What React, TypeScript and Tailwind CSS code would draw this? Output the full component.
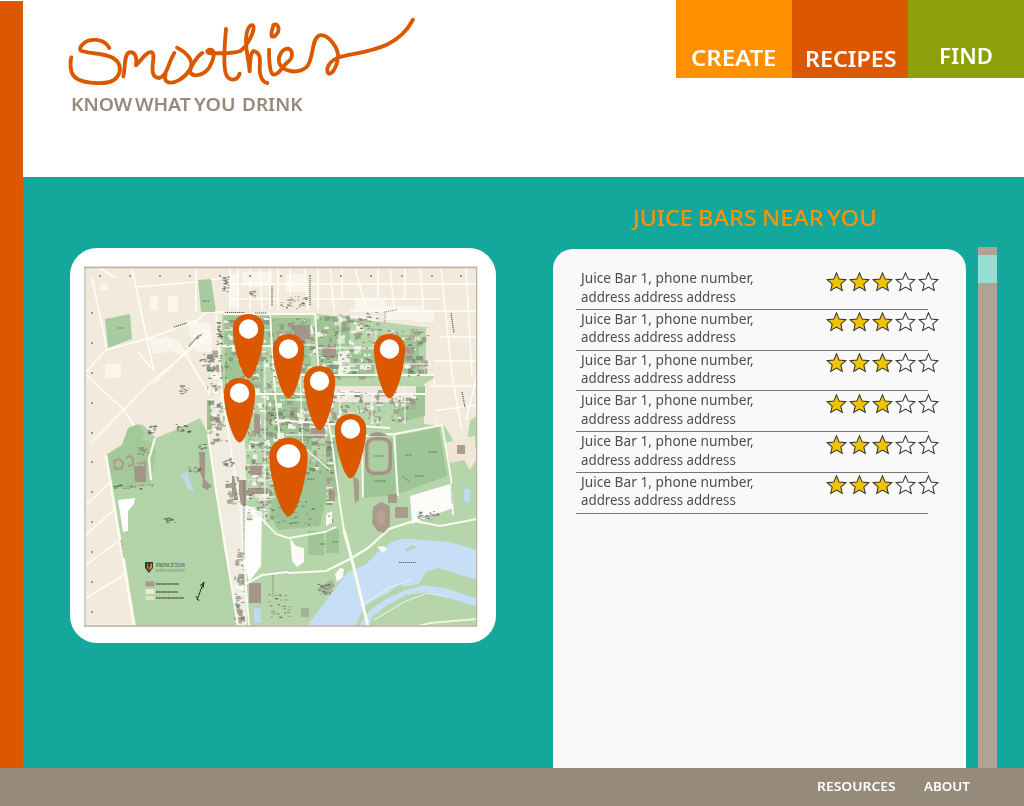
import { useLayoutEffect, useRef, useState } from "react";

type FitProps = { width: number; className?: string; children: string };

/** Text on one line, stretched or condensed to a given width. */
function Fit({ width, className = "", children }: FitProps) {
  const ref = useRef<HTMLSpanElement>(null);
  const [scale, setScale] = useState(1);
  useLayoutEffect(() => {
    if (ref.current) setScale(width / ref.current.offsetWidth);
  }, [width]);
  return (
    <span className={`block whitespace-nowrap ${className}`} style={{ width }}>
      <span ref={ref} className="inline-block origin-left" style={{ transform: `scaleX(${scale})` }}>
        {children}
      </span>
    </span>
  );
}

function Logo() {
  return (
    <svg
      viewBox="0 0 1080 250"
      className="block h-[83.33px] w-[360px]"
      fill="none"
      stroke="#db5800"
      strokeWidth="11.5"
      strokeLinecap="round"
      strokeLinejoin="round"
      role="img"
      aria-label="Smoothies"
    >
      <path d="M148 114C132 84 88 84 70 101C60 109 57 120 65 123C92 132 132 128 159 144C182 157 184 180 174 197C158 223 120 221 92 218C58 214 41 205 35 187C31 173 30 158 34 142" />
      <path d="M190 199C196 174 192 131 208 127C225 124 232 142 228 166C244 152 260 121 276 127C291 136 259 202 297 204C320 202 324 160 343 129" />
      <path d="M351 113C383 130 406 155 388 181C371 207 343 221 326 217C313 213 314 202 317 194" />
      <path d="M427 129C413 137 387 176 391 188C402 204 435 194 449 170C460 151 466 126 457 121C447 116 434 124 448 130C480 128 510 134 541 123C561 111 590 54 578 46C567 41 558 67 558 88C557 128 566 143 569 184C570 153 571 127 581 123C613 130 593 174 601 194C605 211 612 218 622 219" />
      <path d="M498 57C494 110 488 153 497 189C504 214 531 216 539 191" />
      <path d="M627 119C627 144 628 177 636 191C650 204 668 169 682 157C700 145 700 122 686 116C667 115 654 137 657 155C663 185 710 194 739 172C763 149 752 85 779 76C804 71 838 115 834 145C830 173 816 193 806 191C795 180 807 150 840 141C925 121 1014 117 1059 29" />
      <path d="M635 79C631 65 638 62 640 45C651 38 659 52 654 66C648 77 641 82 635 79Z" />
    </svg>
  );
}

function rng(seed: number) {
  let s = seed;
  return () => {
    s = (s * 16807) % 2147483647;
    return s / 2147483647;
  };
}

type Area = { x: number; y: number; w: number; h: number; n: number };
type Block = { x: number; y: number; w: number; h: number; c: string };

const tones = ["#8f9a7f", "#a89d90", "#76856f", "#b5a795", "#84957a", "#fbfcf7", "#fbfcf7", "#e9ecdf", "#a3958a"];

const campus: Area[] = [
  { x: 224, y: 316, w: 48, h: 78, n: 95 },
  { x: 270, y: 318, w: 47, h: 108, n: 120 },
  { x: 315, y: 314, w: 60, h: 66, n: 100 },
  { x: 374, y: 328, w: 56, h: 50, n: 75 },
  { x: 245, y: 394, w: 30, h: 128, n: 120 },
  { x: 208, y: 396, w: 20, h: 50, n: 34 },
  { x: 270, y: 416, w: 58, h: 60, n: 90 },
  { x: 318, y: 390, w: 100, h: 38, n: 85 },
  { x: 206, y: 350, w: 17, h: 46, n: 34 },
  { x: 326, y: 440, w: 8, h: 85, n: 24 },
  { x: 234, y: 546, w: 12, h: 78, n: 36 },
  { x: 225, y: 476, w: 16, h: 30, n: 16 },
];

const labels: Area[] = [
  { x: 216, y: 322, w: 7, h: 24, n: 34 },
  { x: 280, y: 296, w: 28, h: 14, n: 26 },
  { x: 353, y: 312, w: 28, h: 20, n: 20 },
  { x: 178, y: 385, w: 12, h: 10, n: 14 },
  { x: 163, y: 517, w: 14, h: 7, n: 14 },
  { x: 222, y: 276, w: 8, h: 17, n: 22 },
  { x: 248, y: 290, w: 10, h: 9, n: 10 },
  { x: 136, y: 447, w: 14, h: 9, n: 16 },
  { x: 113, y: 484, w: 42, h: 7, n: 22 },
  { x: 317, y: 584, w: 18, h: 12, n: 24 },
  { x: 417, y: 511, w: 24, h: 10, n: 30 },
  { x: 268, y: 594, w: 24, h: 25, n: 30 },
  { x: 147, y: 424, w: 11, h: 12, n: 18 },
  { x: 172, y: 424, w: 20, h: 12, n: 18 },
  { x: 199, y: 354, w: 14, h: 14, n: 20 },
  { x: 221, y: 458, w: 15, h: 10, n: 22 },
  { x: 187, y: 466, w: 14, h: 8, n: 14 },
  { x: 276, y: 500, w: 46, h: 26, n: 34 },
  { x: 198, y: 443, w: 10, h: 8, n: 12 },
];

function scatter(areas: Area[], seed: number, colors: string[], max: number): Block[] {
  const r = rng(seed);
  return areas.flatMap((a) =>
    Array.from({ length: a.n }, () => {
      const w = 1.2 + r() * max;
      const h = 0.9 + r() * max * 0.7;
      return {
        x: a.x + r() * (a.w - w),
        y: a.y + r() * (a.h - h),
        w,
        h,
        c: colors[Math.floor(r() * colors.length)],
      };
    }),
  );
}

const buildings = scatter(campus, 4127, tones, 6.5);
const inks = ["#4d5548", "#6f7564", "#8d8b7c"];
const marks = [...scatter(campus, 913, inks, 2).filter((_, i) => i % 5 < 3), ...scatter(labels, 77, inks, 2.4)];

function Pin({ x, y, s = 1 }: { x: number; y: number; s?: number }) {
  return (
    <g transform={`translate(${x} ${y}) scale(${s})`}>
      <path
        d="M0-15C9-15 15.7-9 15.7 0C15.7 16 6.8 49.5 0 49.5C-6.8 49.5-15.7 16-15.7 0C-15.7-9-9-15 0-15Z"
        fill="#db5800"
      />
      <circle r="9.7" fill="#fff" />
    </g>
  );
}

function CampusMap() {
  return (
    <svg viewBox="84 266 394 361" className="block h-[361px] w-[394px]" role="img" aria-label="Map of juice bars">
      <defs>
        <filter id="soft" x="0" y="0" width="1" height="1">
          <feGaussianBlur stdDeviation="0.45" />
        </filter>
      </defs>
      <g filter="url(#soft)">
        <rect x="84" y="266" width="394" height="361" fill="#f2eadc" />
        <g fill="#faf6ee">
          <path d="M150 296h8v14h-8zM168 296h10v16h-10zM148 338h16l4 14-14 2zM164 336l16 6 4 14-16-6zM186 320l24 4 2 18-18 6zM105 364h16v14h-16zM100 284h8v6h-8z" />
          <path d="M230 274h8v34h-8zM242 272h30v14h-30zM286 274h20v18h-20zM355 298h30v12h-30zM350 316h28v16h-28zM384 306h40v14h-40zM414 310h20v12h-20zM196 330h16v22h-16z" opacity=".85" />
        </g>
        <g fill="none" stroke="#fffef6" strokeWidth="1.5">
          <path d="M86 372L106 350L150 338L198 320L206 312H224M92 278L107 350M132 268L154 372M136 287L196 282L222 278M153 384L204 334M92 442L153 380L210 334M86 375L124 410L140 435M153 370L138 352M180 345L210 395M100 268L116 278M196 268V312M230 268V310M238 268V310M250 268V310M260 268L262 310M270 268V310M278 268V310M290 268V296M305 268L308 310M318 268V310M330 267L334 310M342 268V298M355 268L366 308M378 268V300M390 268L394 308M405 268V300M420 268L424 312M441 268L452 376M466 268L472 376" />
          <path d="M224 284H477M230 299H280M312 299H440M350 311H477M440 337H477M430 361H477M430 386H477M425 412L477 405M452 376L462 430M477 376L466 420M436 424L434 376M86 535L116 508M86 505L110 482M86 565L120 540M86 598L132 570" />
        </g>
        <path d="M105 319L130 314L132 339L108 348Z" fill="#a8cca0" />
        <path d="M198 280L211 279L216 312H201Z" fill="#a8cca0" />

        <path
          d="M106 455L122 445L128 430L142 424L156 438L180 428L200 418L208 434L215 480L224 548L233 595L239 626H136L126 565L112 492Z"
          fill="#b2d2a7"
        />
        <path d="M106 455L122 445L128 428L138 424L144 432L142 440L152 442L156 452L150 486L114 489Z" fill="#a3c999" />
        <path d="M222 315L317 314L432 328L434 378L424 384V424L445 426L470 470L477 458V626H240L230 545L220 450Z" fill="#b7d5aa" />
        <path d="M470 420L477 416V450L468 436Z" fill="#b7d5aa" />
        <g fill="#9fc596">
          <path d="M224 316h46v28h-46zM272 318h39v52h-39zM317 316h33v30h-33zM225 348h38v44h-38zM317 350h58v28h-58zM375 335h44v38h-44zM266 395h46v55h-46zM207 400h18v30h-18zM326 435h12v62h-12z" />
          <path d="M278 462L328 462L326 500L320 526L278 530L270 515Z" />
          <path d="M388 392L425 386V416L400 422ZM366 442L393 438L396 495L363 498ZM396 436L439 427L447 476L398 494Z" />
          <path d="M308 531h16v24h-16zM326 529h13v24h-13z" />
        </g>
        <path d="M210 395L240 392L246 455L246 510L247 626H238L224 530L213 455Z" fill="#f1ece2" />
        <path d="M246 505L262 512L261 566L249 582L243 560Z" fill="#fdfdfb" />
        <path d="M118 500L135 498L134 504L128 511V531L123 532Z" fill="#fff" />
        <path d="M410 496L450 484L453 508L426 518L412 524Z" fill="#fbfbf7" />
        <path d="M445 443L475 436V458L450 463Z" fill="#efe6d7" />
        <path d="M318 386H416V402H318Z" fill="#efe7df" />
        <path d="M426 328H434V376H426ZM425 387H436V423H425Z" fill="#f1eadc" />
        <path d="M338 352L350 350V372L338 376Z" fill="#eef2e5" />

        <g>
          {buildings.map((b, i) => (
            <rect key={i} x={b.x} y={b.y} width={b.w} height={b.h} fill={b.c} opacity=".8" />
          ))}
        </g>
        <g fill="#a5968c">
          <path d="M294 325h16v14h-5v7h-11zM322 344l4 3 3-4 3 4 4-4v14h-14zM250 465h12v10h-12zM248 488h20v6h-20zM239 480h7v26h-7zM249 583h12v20h-12zM254 414h6v20h-6zM232 476h5v20h-5zM311 428h14v10h-14z" />
        </g>
        <g fill="none" stroke="#fafcef" strokeWidth="1.8">
          <path d="M224 314L316 314M216 310L222 394L240 505L249 626M270 314L275 394L280 438M315 314L319 375L331 435L340 505L344 530L352 560L368 626M222 346H272M222 394H426M275 375H434M275 420L390 428M330 436L362 436L395 434L442 425M362 436L363 497M394 434L398 496M442 425L451 478L453 515M240 505L261 518L276 534L289 538L325 532L336 527" />
          <path d="M288 573L326 571L350 559L368 548L389 529L414 521L440 526L477 519M242 586L262 575L288 572M208 434L216 490L238 626M155 438L149 459L151 480" strokeWidth="2.2" />
          <path d="M106 455L134 626" strokeWidth="2.6" />
        </g>
        <path d="M265 360V525M300 375L303 450M295 440L330 470M246 450H270M245 480H275M246 465H272M246 497H275M224 330H270M272 345H315M316 348H376M316 364H432M376 330V376M395 333V376M340 316V375M246 352V394M280 400H315M285 435H328M340 400V428M372 398V424M405 388V424M226 420H245" fill="none" stroke="#f5f8ec" strokeWidth="1.1" />

        <g fill="none" stroke="#ab9c8d" strokeWidth="2">
          <path d="M114 461l5-2 4 3-1 6-7 1zM126 458l4-2 3 3v6l-5 1M137 462l3 2 5-2v6l-3 3" />
        </g>
        <g fill="#a59587">
          <path d="M134 466h12v16h-11zM199 452h6v28l7 6-5 4-5-3 1-7-3-8z" />
          <path d="M373 507l8-5 9 4v20l-6 7-7-2-5-8zM395 507h13v11h-13zM388 494h9v9h-9zM353 476l6 4v20l-4 3zM329 488l6 3v10h-6zM457 445h8v9h-8z" opacity=".9" />
          <path d="M368 436q9-8 20 0z" />
        </g>
        <rect x="365" y="437" width="27" height="38" rx="9" fill="#a39386" />
        <rect x="369" y="441" width="19" height="30" rx="5" fill="#a9cfa0" stroke="#c6b9ac" />
        <path d="M376 512l5-2 4 3v11l-7 1z" fill="#b99f94" />

        <path d="M181 475L187 472L194 492L189 490Z" fill="#bed8ee" />
        <path d="M464 489h6v13h-6zM254 608h7v15h-7z" fill="#bddbeb" />
        <path
          d="M307 626L325 602L348 572L365 565L378 552L392 542Q405 536 420 540L450 542L477 550V580L451 572L438 568L426 572L419 584L397 588L380 597L365 606L355 626Z"
          fill="#c7dff6"
        />
        <path d="M359 626L370 610L386 599L405 590L425 585L448 589L477 599V607L447 597L426 592L407 595L389 604L373 616L368 626Z" fill="#c7dff6" />
        <path d="M404 549l9-4 4 2-10 5zM390 591l10-7 4 2-9 7z" fill="#b4d4bb" />
        <path d="M344 530L352 560L368 626" fill="none" stroke="#fafeee" strokeWidth="3" />
        <path d="M365 603L390 587L412 580M374 620L404 602L427 593L448 597" fill="none" stroke="#e3f0ee" strokeWidth="1.2" />
        <path d="M290 538l6 8 8 2v14l-7 5-5-6zM335 574l5-6 4 1-1 8-6 5zM377 547l7-1 3 4-5 2zM326 515l6-4v12l-6 3z" fill="#fbfbf5" />
        <path d="M418 626L430 623L477 619" fill="none" stroke="#eef5e1" strokeWidth="2" />
        <path d="M301 608h8v9h-8zM318 588l14-8 3 6-10 9z" fill="#95a58a" opacity=".7" />

        <g>
          {marks.map((b, i) => (
            <rect key={i} x={b.x} y={b.y} width={b.w} height={b.h * 0.55} fill={b.c} opacity=".8" />
          ))}
        </g>
        <g fill="none" stroke="#62675a" strokeWidth="1.2" strokeDasharray="1.3 .7">
          <path d="M174 327L187 323M189 346L199 335M272 286V306M310 278V306M451 313L454 333M462 392L465 407M197 339l5-5M399 562.500H416M374 481H386M374 456H383M405 455H412M428 452H437M415 476H425M118 328h6M202 301h7M225 312.500h20M255 313h12M320 544h6M332 542h6M307 479h8" />
          <path d="M384 312L397 310M385 323V312M402 476L410 482M452 484v20M121 540l3 18M273 575v22M244 480v80" opacity=".6" />
        </g>
        <g fill="#a29b8d">
          {[100, 130, 160, 190, 220, 250, 281, 310, 341, 371, 402, 432, 461].map((x) => (
            <rect key={x} x={x - 1} y="275" width="2" height="2" />
          ))}
          {[312, 342, 372, 402, 432, 461, 491, 521, 551, 581, 611].map((y) => (
            <rect key={y} x="91" y={y} width="2" height="2" />
          ))}
        </g>
      </g>
      <path d="M145 562h8v6l-4 5-4-5z" fill="#3b342c" />
      <path d="M147 563l2 2 3-2v5l-3 3-2-3z" fill="#dd8543" />
      <path d="M147.500 565.500h3M149 564v6" stroke="#2b2520" strokeWidth="1.1" />
      <text x="156" y="567" fontFamily="Liberation Serif, serif" fontSize="5.8" textLength="29" lengthAdjust="spacingAndGlyphs" fill="#3f453b">PRINCETON</text>
      <text x="156" y="572" fontFamily="Liberation Serif, serif" fontSize="4.2" textLength="29" fill="#667461">UNIVERSITY</text>
      <path d="M145.500 581.500h9v5h-9z" fill="#a89b88" />
      <path d="M145.500 589h9v5h-9z" fill="#f1e6d4" />
      <path d="M145.500 596h9v4h-9z" fill="#dce1bf" />
      <path d="M156 584h23M156 592h22M156 598h28" stroke="#56614c" strokeWidth="1.4" strokeDasharray="2 .4" />
      <path d="M197 600L203 584M200 586l4-4-1 6M196 596l3 5" fill="none" stroke="#22271f" strokeWidth="1" />
      <path d="M84 267.500H477M84 626H477" stroke="#bdb5a8" strokeWidth="1.6" />
      <path d="M85 267V626M476.500 267V626" stroke="#b7b1a5" strokeWidth="1" />

      <Pin x={248.5} y={329} />
      <Pin x={288.5} y={349} />
      <Pin x={389.5} y={349} />
      <Pin x={319.5} y={381} />
      <Pin x={239.5} y={393} />
      <Pin x={350.5} y={429} />
      <Pin x={288.5} y={456} s={1.22} />
    </svg>
  );
}

function Star({ filled }: { filled: boolean }) {
  return (
    <svg viewBox="-11.5 -11 23 22" className="h-[22px] w-[23px] shrink-0">
      <path
        d="M0-9.1L2.7-2.9L9.3-2.3L4.3 2.1L5.8 8.4L0 5.1L-5.8 8.4L-4.3 2.1L-9.3-2.3L-2.7-2.9Z"
        fill={filled ? "#f0c400" : "#fcfcfc"}
        stroke="#333"
        strokeWidth="1.05"
      />
    </svg>
  );
}

function JuiceBar({ rating }: { rating: number }) {
  return (
    <li className="flex h-[40.8px] w-[352px] border-b border-[#757575] pl-[5px] last:h-[41.5px]">
      <div className="-mt-px w-[244px] shrink-0 text-[14.5px] leading-[18.5px] text-[#4d4d4d]">
        <Fit width={173}>Juice Bar 1, phone number,</Fit>
        <Fit width={155}>address address address</Fit>
      </div>
      <div className="flex shrink-0 pt-[1.5px]">
        {[1, 2, 3, 4, 5].map((n) => (
          <Star key={n} filled={n <= rating} />
        ))}
      </div>
    </li>
  );
}

export default function App() {
  return (
    <div className="flex h-[806px] w-[1024px] flex-col overflow-hidden bg-white font-['Noto_Sans',sans-serif]">
      <div className="flex h-[768px]">
        <div className="mt-px w-[23.4px] shrink-0 bg-[#db5800]" />
        <div className="flex min-w-0 flex-1 flex-col">
          <header className="flex h-[177px] shrink-0 justify-between">
            <div className="pt-[10px] pl-[36.5px]">
              <Logo />
              <div className="-mt-px flex gap-[3px] pl-[11px] text-[18.7px] leading-[24px] font-semibold text-[#968a7a]">
                <Fit width={61}>KNOW</Fit>
                <Fit width={56}>WHAT</Fit>
                <Fit width={42}>YOU</Fit>
                <Fit width={61} className="ml-[3px]">DRINK</Fit>
              </div>
            </div>
            <nav className="flex h-[78.4px] text-[22px] leading-[30px] font-semibold text-white">
              <a className="w-[116px] bg-[#ff9000] pt-[42px] pl-[15px]">
                <Fit width={86}>CREATE</Fit>
              </a>
              <a className="w-[116px] bg-[#db5800] pt-[43px] pl-[13px]">
                <Fit width={92}>RECIPES</Fit>
              </a>
              <a className="w-[116.5px] bg-[#8ca009] pt-[40px] pl-[31px]">
                <Fit width={54.5}>FIND</Fit>
              </a>
            </nav>
          </header>
          <main className="flex flex-1 bg-[#14a89d]">
            <div className="ml-[46.5px] mt-[70.5px] h-[395px] w-[426.5px] shrink-0 rounded-[27px] bg-white pt-[18.5px] pl-[14px]">
              <CampusMap />
            </div>
            <section className="ml-[56.5px] flex w-[413px] shrink-0 flex-col">
              <h1 className="flex h-[72px] pt-[25px] pl-[80px] text-[22px] leading-[30px] font-medium text-[#ff9000]">
                <Fit width={60}>JUICE</Fit>
                <Fit width={59} className="ml-[5px]">BARS</Fit>
                <Fit width={62} className="ml-[5px]">NEAR</Fit>
                <Fit width={50} className="ml-[3px]">YOU</Fit>
              </h1>
              <div className="flex-1 rounded-t-[20px] bg-[#f9f9f9] pt-[20px] pl-[23px]">
                <ul>
                  {[3, 3, 3, 3, 3, 3].map((r, i) => (
                    <JuiceBar key={i} rating={r} />
                  ))}
                </ul>
              </div>
            </section>
            <div className="ml-[11.7px] mt-[70.3px] w-[19px] bg-[#afa396] pt-[8px]">
              <div className="h-7 bg-[#96ddd2]" />
            </div>
          </main>
        </div>
      </div>
      <footer className="flex h-[38px] gap-[28px] bg-[#968a7a] pt-[8px] pl-[817px] text-[12.8px] leading-[20px] font-semibold text-white">
        <Fit width={79}>RESOURCES</Fit>
        <Fit width={46}>ABOUT</Fit>
      </footer>
    </div>
  );
}
